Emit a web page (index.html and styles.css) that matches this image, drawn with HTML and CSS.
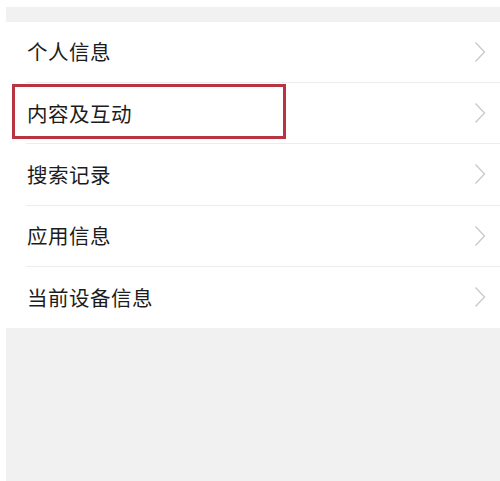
FILE: index.html
```html
<!DOCTYPE html>
<html lang="zh-CN">
<head>
<meta charset="utf-8">
<link rel="stylesheet" href="styles.css">
</head>
<body>
<div class="screen">
  <div class="strip"></div>
  <ul class="menu">
    <li class="item"><div class="inner"><span class="label">个人信息</span><svg class="chev" viewBox="0 0 12 22"><path d="M1.5 1.5 L10.5 11 L1.5 20.5"/></svg></div></li>
    <li class="item item-marked"><div class="inner"><span class="label">内容及互动</span><svg class="chev" viewBox="0 0 12 22"><path d="M1.5 1.5 L10.5 11 L1.5 20.5"/></svg></div><div class="mark"></div></li>
    <li class="item"><div class="inner"><span class="label">搜索记录</span><svg class="chev" viewBox="0 0 12 22"><path d="M1.5 1.5 L10.5 11 L1.5 20.5"/></svg></div></li>
    <li class="item"><div class="inner"><span class="label">应用信息</span><svg class="chev" viewBox="0 0 12 22"><path d="M1.5 1.5 L10.5 11 L1.5 20.5"/></svg></div></li>
    <li class="item item-last"><div class="inner"><span class="label">当前设备信息</span><svg class="chev" viewBox="0 0 12 22"><path d="M1.5 1.5 L10.5 11 L1.5 20.5"/></svg></div></li>
  </ul>
  <div class="rest"></div>
</div>
</body>
</html>
```

FILE: styles.css
```css
html, body {
  margin: 0;
  padding: 0;
  background: #ffffff;
}
body {
  font-family: "Noto Sans CJK SC", "Noto Sans", sans-serif;
  width: 500px;
  height: 481px;
  overflow: hidden;
}
.screen {
  padding: 7px 0 0 6px;
  height: 481px;
  box-sizing: border-box;
  display: flex;
  flex-direction: column;
}
.strip {
  height: 15px;
  background: #f1f1f1;
  flex: none;
}
.menu {
  list-style: none;
  margin: 0;
  padding: 0;
  background: #ffffff;
  flex: none;
}
.item {
  position: relative;
  height: 61.2px;
  padding-left: 20px;
  box-sizing: border-box;
}
.inner {
  height: 100%;
  box-sizing: border-box;
  border-bottom: 1px solid #ececec;
  display: flex;
  align-items: center;
  justify-content: space-between;
  padding: 0 14px 0 1px;
}
.item-last .inner {
  border-bottom: none;
}
.label {
  font-size: 20.5px;
  color: #1c1c1c;
  letter-spacing: 0.5px;
  line-height: 1;
  margin-top: -1px;
}
.chev {
  width: 12px;
  height: 22px;
  fill: none;
  stroke: #cbcbcb;
  stroke-width: 1.4;
}
.mark {
  position: absolute;
  left: 6px;
  top: 1px;
  width: 274px;
  height: 55px;
  box-sizing: border-box;
  border: 3px solid #b8343f;
}
.rest {
  flex: 1;
  background: #f1f1f1;
}
```
